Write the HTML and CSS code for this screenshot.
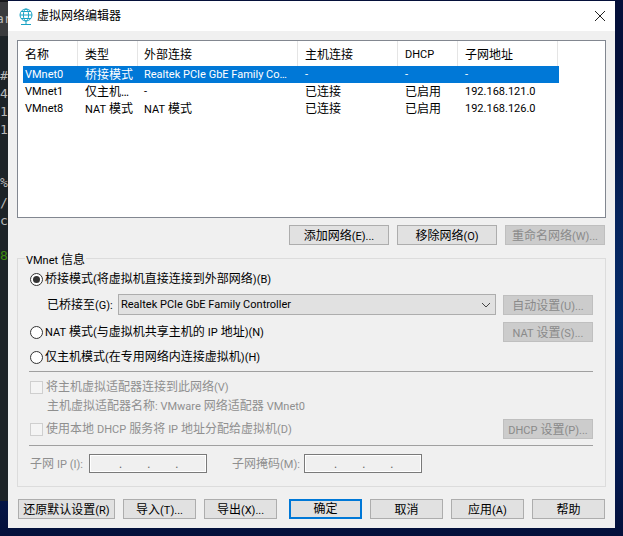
FILE: index.html
```
<!DOCTYPE html>
<html lang="zh-CN">
<head>
<meta charset="utf-8">
<title>虚拟网络编辑器</title>
<link rel="stylesheet" href="styles.css">
</head>
<body>
<div class="desktop">
  <div class="strip">
    <span class="frag f-ar">ar</span>
    <span class="frag f-hash">#</span>
    <span class="frag f-4">4</span>
    <span class="frag f-1a">1</span>
    <span class="frag f-1b">1</span>
    <span class="frag f-pct">%</span>
    <span class="frag f-slash">/</span>
    <span class="frag f-c">c</span>
    <span class="frag f-8">8</span>
  </div>
  <div class="window">
    <header class="titlebar">
      <svg class="appicon" width="16" height="18" viewBox="0 0 16 18" fill="none" stroke="#1aa3c4" stroke-width="1">
        <circle cx="8" cy="7" r="6"/>
        <ellipse cx="8" cy="7" rx="2.6" ry="6"/>
        <path d="M2 7h12M3 3.5h10M3 10.5h10M8 13v3M3 16.500h10"/>
      </svg>
      <span class="title">虚拟网络编辑器</span>
      <svg class="close" width="12" height="12" viewBox="0 0 12 12" stroke="#222" stroke-width="1"><path d="M1 1l10 10M11 1L1 11"/></svg>
    </header>
    <div class="body">
      <div class="listbox">
        <div class="row head">
          <span class="c1">名称</span><span class="c2">类型</span><span class="c3">外部连接</span><span class="c4">主机连接</span><span class="c5 en">DHCP</span><span class="c6">子网地址</span>
        </div>
        <div class="row sel">
          <span class="c1 en">VMnet0</span><span class="c2">桥接模式</span><span class="c3 en">Realtek PCIe GbE Family Co…</span><span class="c4 en">-</span><span class="c5 en">-</span><span class="c6 en">-</span>
        </div>
        <div class="row">
          <span class="c1 en">VMnet1</span><span class="c2">仅主机…</span><span class="c3 en">-</span><span class="c4">已连接</span><span class="c5">已启用</span><span class="c6 en">192.168.121.0</span>
        </div>
        <div class="row">
          <span class="c1 en">VMnet8</span><span class="c2"><span class="en">NAT</span> 模式</span><span class="c3"><span class="en">NAT</span> 模式</span><span class="c4">已连接</span><span class="c5">已启用</span><span class="c6 en">192.168.126.0</span>
        </div>
      </div>

      <div class="netbtns">
        <button class="btn w100">添加网络<span class="en">(E)...</span></button>
        <button class="btn w100">移除网络<span class="en">(O)</span></button>
        <button class="btn w100 off">重命名网络<span class="en">(W)...</span></button>
      </div>

      <fieldset class="group">
        <legend class="legend"><span class="en">VMnet</span> 信息</legend>
        <div class="line l1">
          <span class="radio on"></span><span class="lbl">桥接模式<span class="en">(</span>将虚拟机直接连接到外部网络<span class="en">)(B)</span></span>
        </div>
        <div class="line l2">
          <span class="lbl bridged">已桥接至<span class="en">(G):</span></span>
          <div class="combo"><span class="en">Realtek PCIe GbE Family Controller</span>
            <svg width="10" height="6" viewBox="0 0 10 6" fill="none" stroke="#444" stroke-width="1"><path d="M1 1l4 4 4-4"/></svg>
          </div>
          <button class="btn side off">自动设置<span class="en">(U)...</span></button>
        </div>
        <div class="line l3">
          <span class="radio"></span><span class="lbl"><span class="en">NAT</span> 模式<span class="en">(</span>与虚拟机共享主机的 <span class="en">IP</span> 地址<span class="en">)(N)</span></span>
          <button class="btn side off natbtn"><span class="en">NAT</span> 设置<span class="en">(S)...</span></button>
        </div>
        <div class="line l4">
          <span class="radio"></span><span class="lbl">仅主机模式<span class="en">(</span>在专用网络内连接虚拟机<span class="en">)(H)</span></span>
        </div>
        <div class="sep s1"></div>
        <div class="line l5">
          <span class="check"></span><span class="lbl dim">将主机虚拟适配器连接到此网络<span class="en">(V)</span></span>
        </div>
        <div class="line l6"><span class="lbl dim">主机虚拟适配器名称<span class="en">: VMware</span> 网络适配器 <span class="en">VMnet0</span></span></div>
        <div class="line l7">
          <span class="check"></span><span class="lbl dim">使用本地 <span class="en">DHCP</span> 服务将 <span class="en">IP</span> 地址分配给虚拟机<span class="en">(D)</span></span>
          <button class="btn side off"><span class="en">DHCP</span> 设置<span class="en">(P)...</span></button>
        </div>
        <div class="sep s2"></div>
        <div class="line l8">
          <span class="lbl dim ipl">子网 <span class="en">IP (I):</span></span>
          <div class="ipbox"><i>.</i><i>.</i><i>.</i></div>
          <span class="lbl dim maskl">子网掩码<span class="en">(M):</span></span>
          <div class="ipbox"><i>.</i><i>.</i><i>.</i></div>
        </div>
      </fieldset>

      <div class="footer">
        <button class="btn w97">还原默认设置<span class="en">(R)</span></button>
        <button class="btn w73">导入<span class="en">(T)...</span></button>
        <button class="btn w73">导出<span class="en">(X)...</span></button>
        <button class="btn w73 primary">确定</button>
        <button class="btn w73">取消</button>
        <button class="btn w73">应用<span class="en">(A)</span></button>
        <button class="btn w73">帮助</button>
      </div>
    </div>
  </div>
</div>
</body>
</html>
```

FILE: styles.css
```
* { box-sizing: border-box; }
html, body { margin: 0; padding: 0; }
body {
  width: 623px;
  height: 536px;
  overflow: hidden;
  font-family: Roboto, "Noto Sans CJK SC", sans-serif;
  font-size: 12px;
  color: #000;
}
.en { font-size: 11px; }
.desktop {
  position: relative;
  width: 623px;
  height: 536px;
  overflow: hidden;
  background: linear-gradient(180deg, #04103a 0, #04103a 15%, #06245c 40%, #052a68 60%, #04184c 90%, #04103a 100%);
}
.strip {
  position: absolute;
  left: 0;
  top: 0;
  width: 8px;
  height: 501px;
  overflow: hidden;
  background: linear-gradient(180deg, #18191c 0, #18191c 2px, #3a3b3d 2px, #3a3b3d 36px, #1d2327 36px);
}
.frag {
  position: absolute;
  font-family: "DejaVu Sans Mono", monospace;
  font-size: 13px;
  line-height: 16px;
  color: #b8b8b8;
}
.f-ar { left: -4px; top: 11px; }
.f-hash { left: 0; top: 68px; }
.f-4 { left: 0; top: 86px; }
.f-1a { left: 0; top: 104px; }
.f-1b { left: 0; top: 122px; }
.f-pct { left: 0; top: 175px; }
.f-slash { left: 0; top: 195px; }
.f-c { left: 0; top: 213px; }
.f-8 { left: 0; top: 248px; color: #3f8f10; }

.window {
  position: absolute;
  left: 8px;
  top: 1px;
  width: 607px;
  height: 527px;
  background: #f0f0f0;
  display: flex;
  flex-direction: column;
}
.titlebar {
  height: 30px;
  flex: none;
  background: #fff;
  display: flex;
  align-items: center;
  padding: 0 9px 0 10px;
}
.appicon { flex: none; margin-top: 1px; }
.title { margin-left: 3px; font-size: 12px; line-height: 16px; flex: 1; }
.close { flex: none; }

.body {
  flex: 1;
  padding: 9px 9px 0 9px;
  display: flex;
  flex-direction: column;
}
.listbox {
  height: 178px;
  flex: none;
  background: #fff;
  border: 1px solid #828790;
  padding-left: 5px;
}
.row {
  display: flex;
  width: 536px;
  height: 17px;
  line-height: 18px;
  white-space: nowrap;
}
.row > span {
  flex: none;
  padding-left: 2px;
  overflow: hidden;
}
.row .c1 { width: 55px; }
.row .c2 { width: 60px; padding-left: 7px; }
.row .c3 { width: 160px; padding-left: 6px; }
.row .c4 { width: 100px; padding-left: 7px; }
.row .c5 { width: 60px; padding-left: 7px; }
.row .c6 { width: 101px; padding-left: 7px; }
.row.head { height: 25px; line-height: 28px; }
.row.head > span { border-right: 1px solid #e5e5e5; height: 25px; }
.row.head .c6 { width: 100px; }
.row.sel { background: #0078d7; color: #fff; }

.netbtns {
  display: flex;
  justify-content: flex-end;
  gap: 8px;
  margin-top: 7px;
  padding-right: 1px;
  flex: none;
}
.btn {
  flex: none;
  height: 20px;
  padding: 2px 0 0;
  margin: 0;
  font: inherit;
  line-height: 16px;
  color: #000;
  background: #e1e1e1;
  border: 1px solid #adadad;
  white-space: nowrap;
}
.btn.off { color: #8a8a8a; background: #cccccc; border-color: #bfbfbf; }
.w100 { width: 100px; }
.w97 { width: 97px; }
.w73 { width: 73px; }
.btn.primary { border: 2px solid #0078d7; padding-top: 0; }
.side { width: 90px; }

.group {
  position: relative;
  margin: 13px 0 0 0;
  padding: 0;
  min-width: 0;
  height: 229px;
  flex: none;
  border: 1px solid #dcdcdc;
  display: block;
}
.legend {
  position: absolute;
  left: 7px;
  top: -7px;
  padding: 0 1px;
  background: #f0f0f0;
  line-height: 16px;
}
.line {
  display: flex;
  align-items: center;
  padding-left: 12px;
  padding-right: 12px;
  line-height: 16px;
}
.lbl { white-space: nowrap; padding-top: 1px; }
.radio {
  flex: none;
  width: 13px;
  height: 13px;
  border: 1px solid #333;
  border-radius: 50%;
  background: #fff;
  margin-right: 2px;
  display: flex;
  align-items: center;
  justify-content: center;
}
.radio.on::after {
  content: "";
  width: 7px;
  height: 7px;
  border-radius: 50%;
  background: #333;
}
.check {
  flex: none;
  width: 13px;
  height: 13px;
  border: 1px solid #cfcfcf;
  background: #f4f4f4;
  margin-right: 3px;
}
.dim { color: #8f8f8f; }
.l1 { height: 16px; margin-top: 12px; }
.l2 { height: 21px; margin-top: 7px; padding-left: 29px; }
.bridged { width: 71px; flex: none; }
.combo {
  flex: none;
  width: 378px;
  height: 21px;
  background: #e1e1e1;
  border: 1px solid #adadad;
  display: flex;
  align-items: center;
  justify-content: space-between;
  padding: 0 4px 0 2px;
  margin-right: 7px;
}
.l3 { height: 20px; margin-top: 7px; }
.natbtn { margin-left: auto; }
.l4 { height: 16px; margin-top: 7px; }
.sep { height: 1px; background: #a0a0a0; margin: 0 12px 0 11px; }
.s1 { margin-top: 6px; }
.l5 { height: 16px; margin-top: 7px; }
.l6 { height: 16px; margin-top: 3px; padding-left: 29px; }
.l7 { height: 20px; margin-top: 5px; justify-content: flex-start; }
.l7 .btn { margin-left: auto; }
.s2 { margin-top: 6px; }
.l8 { height: 19px; margin-top: 8px; padding-left: 12px; }
.ipl { width: 59px; flex: none; }
.maskl { width: 72px; flex: none; margin-left: 25px; }
.ipbox {
  flex: none;
  width: 118px;
  height: 19px;
  background: #f0f0f0;
  border: 1px solid #7a7a7a;
  box-shadow: inset 0 0 0 1px #fff;
  display: flex;
  justify-content: flex-start;
  gap: 25px;
  padding-left: 29px;
  align-items: flex-end;
}
.ipbox i { font-style: normal; font-size: 12px; line-height: 15px; color: #666; }

.footer {
  display: flex;
  flex: none;
  margin-top: 12px;
  padding-left: 1px;
  gap: 8px;
}
.footer .w73:nth-child(4) { margin-left: 4px; }
```
